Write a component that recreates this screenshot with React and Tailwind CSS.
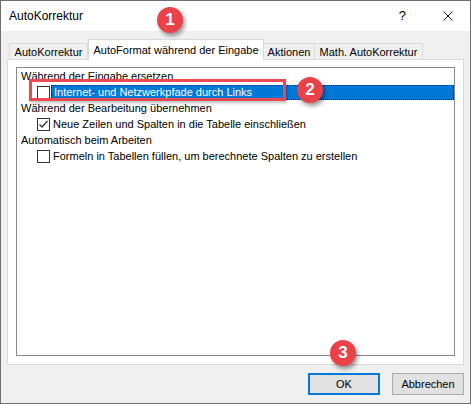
function Checkbox({ checked = false }) {
  return (
    <span className="flex h-[13px] w-[13px] shrink-0 items-center justify-center border border-[#333333] bg-white">
      {checked && (
        <svg width="11" height="11" viewBox="0 0 11 11">
          <polyline points="1.5,5.5 4,8 9.5,2" fill="none" stroke="#333333" strokeWidth="1.3" />
        </svg>
      )}
    </span>
  )
}

function Badge({ n, className }) {
  return (
    <div
      className={`absolute flex h-[26px] w-[26px] items-center justify-center rounded-full bg-[#ea4249] text-[17px] font-bold text-white shadow-[2px_3px_4px_rgba(0,0,0,0.4)] ${className}`}
    >
      {n}
    </div>
  )
}

const tabs = [
  { label: 'AutoKorrektur', w: 'w-[79px]' },
  { label: 'AutoFormat während der Eingabe', w: 'w-[176px]', active: true },
  { label: 'Aktionen', w: 'w-[52px]' },
  { label: 'Math. AutoKorrektur', w: 'w-[109px]' },
]

export default function App() {
  return (
    <div
      className="relative flex h-[404px] w-[471px] flex-col whitespace-nowrap border border-[#6f6f6f] bg-[#f0f0f0] text-[11px] leading-[16px] text-black"
      style={{ fontFamily: '"Liberation Sans", Arial, sans-serif' }}
    >
      {/* Title bar */}
      <div className="flex h-[30px] shrink-0 items-center bg-white pl-[8px]">
        <span className="text-[12px]">AutoKorrektur</span>
        <span className="ml-auto mr-[37px] text-[13px]">?</span>
        <svg className="mr-[17px]" width="10" height="10" viewBox="0 0 10 10">
          <path d="M0.5 0.5 L9.5 9.5 M9.5 0.5 L0.5 9.5" stroke="#222" strokeWidth="1" />
        </svg>
      </div>

      <div className="flex flex-col px-[6px] pt-[8px]">
        {/* Tabs */}
        <div className="relative z-10 flex h-[20px] items-end pl-[2px]">
          {tabs.map((t) =>
            t.active ? (
              <div
                key={t.label}
                className={`${t.w} -mb-px flex h-[21px] items-start justify-center border border-b-0 border-[#d9d9d9] bg-white pt-[2px]`}
              >
                {t.label}
              </div>
            ) : (
              <div
                key={t.label}
                className={`${t.w} flex h-[16px] items-center justify-center border border-b-0 border-[#d9d9d9] bg-[#f0f0f0] -ml-px first:ml-0`}
              >
                {t.label}
              </div>
            )
          )}
        </div>

        {/* Panel */}
        <div className="h-[306px] border border-[#d9d9d9] bg-white px-[8px] pt-[7px]">
          <div className="flex h-[289px] flex-col border border-[#8a8a8a]">
            <div className="h-[16px] pl-[4px]">Während der Eingabe ersetzen</div>
            <div className="flex h-[16px] items-center pl-[20px]">
              <Checkbox />
              <div className="ml-[1px] flex h-[15px] flex-1 items-center border border-dotted border-[#f5a623] bg-[#0078d7] pl-[2px] text-white outline-1 outline-dotted outline-offset-[-1px] outline-black">
                Internet- und Netzwerkpfade durch Links
              </div>
            </div>
            <div className="h-[16px] pl-[4px]">Während der Bearbeitung übernehmen</div>
            <div className="flex h-[16px] items-center gap-[3px] pl-[20px]">
              <Checkbox checked />
              <span>Neue Zeilen und Spalten in die Tabelle einschließen</span>
            </div>
            <div className="h-[16px] pl-[4px]">Automatisch beim Arbeiten</div>
            <div className="flex h-[16px] items-center gap-[3px] pl-[20px]">
              <Checkbox />
              <span>Formeln in Tabellen füllen, um berechnete Spalten zu erstellen</span>
            </div>
          </div>
        </div>

        {/* Buttons */}
        <div className="mt-[8px] flex justify-end gap-[12px]">
          <button className="flex h-[22px] w-[72px] items-center justify-center border-2 border-[#0078d7] bg-[#e1e1e1]">
            OK
          </button>
          <button className="flex h-[22px] w-[72px] items-center justify-center border border-[#adadad] bg-[#e1e1e1]">
            Abbrechen
          </button>
        </div>
      </div>

      {/* Annotation overlays */}
      <div className="absolute left-[28px] top-[78px] h-[22px] w-[257px] border-[3px] border-[#ea4a50] shadow-[1px_2px_3px_rgba(0,0,0,0.25)]" />
      <Badge n="1" className="left-[156px] top-[6px]" />
      <Badge n="2" className="left-[296px] top-[76px]" />
      <Badge n="3" className="left-[329px] top-[339px]" />
    </div>
  )
}
